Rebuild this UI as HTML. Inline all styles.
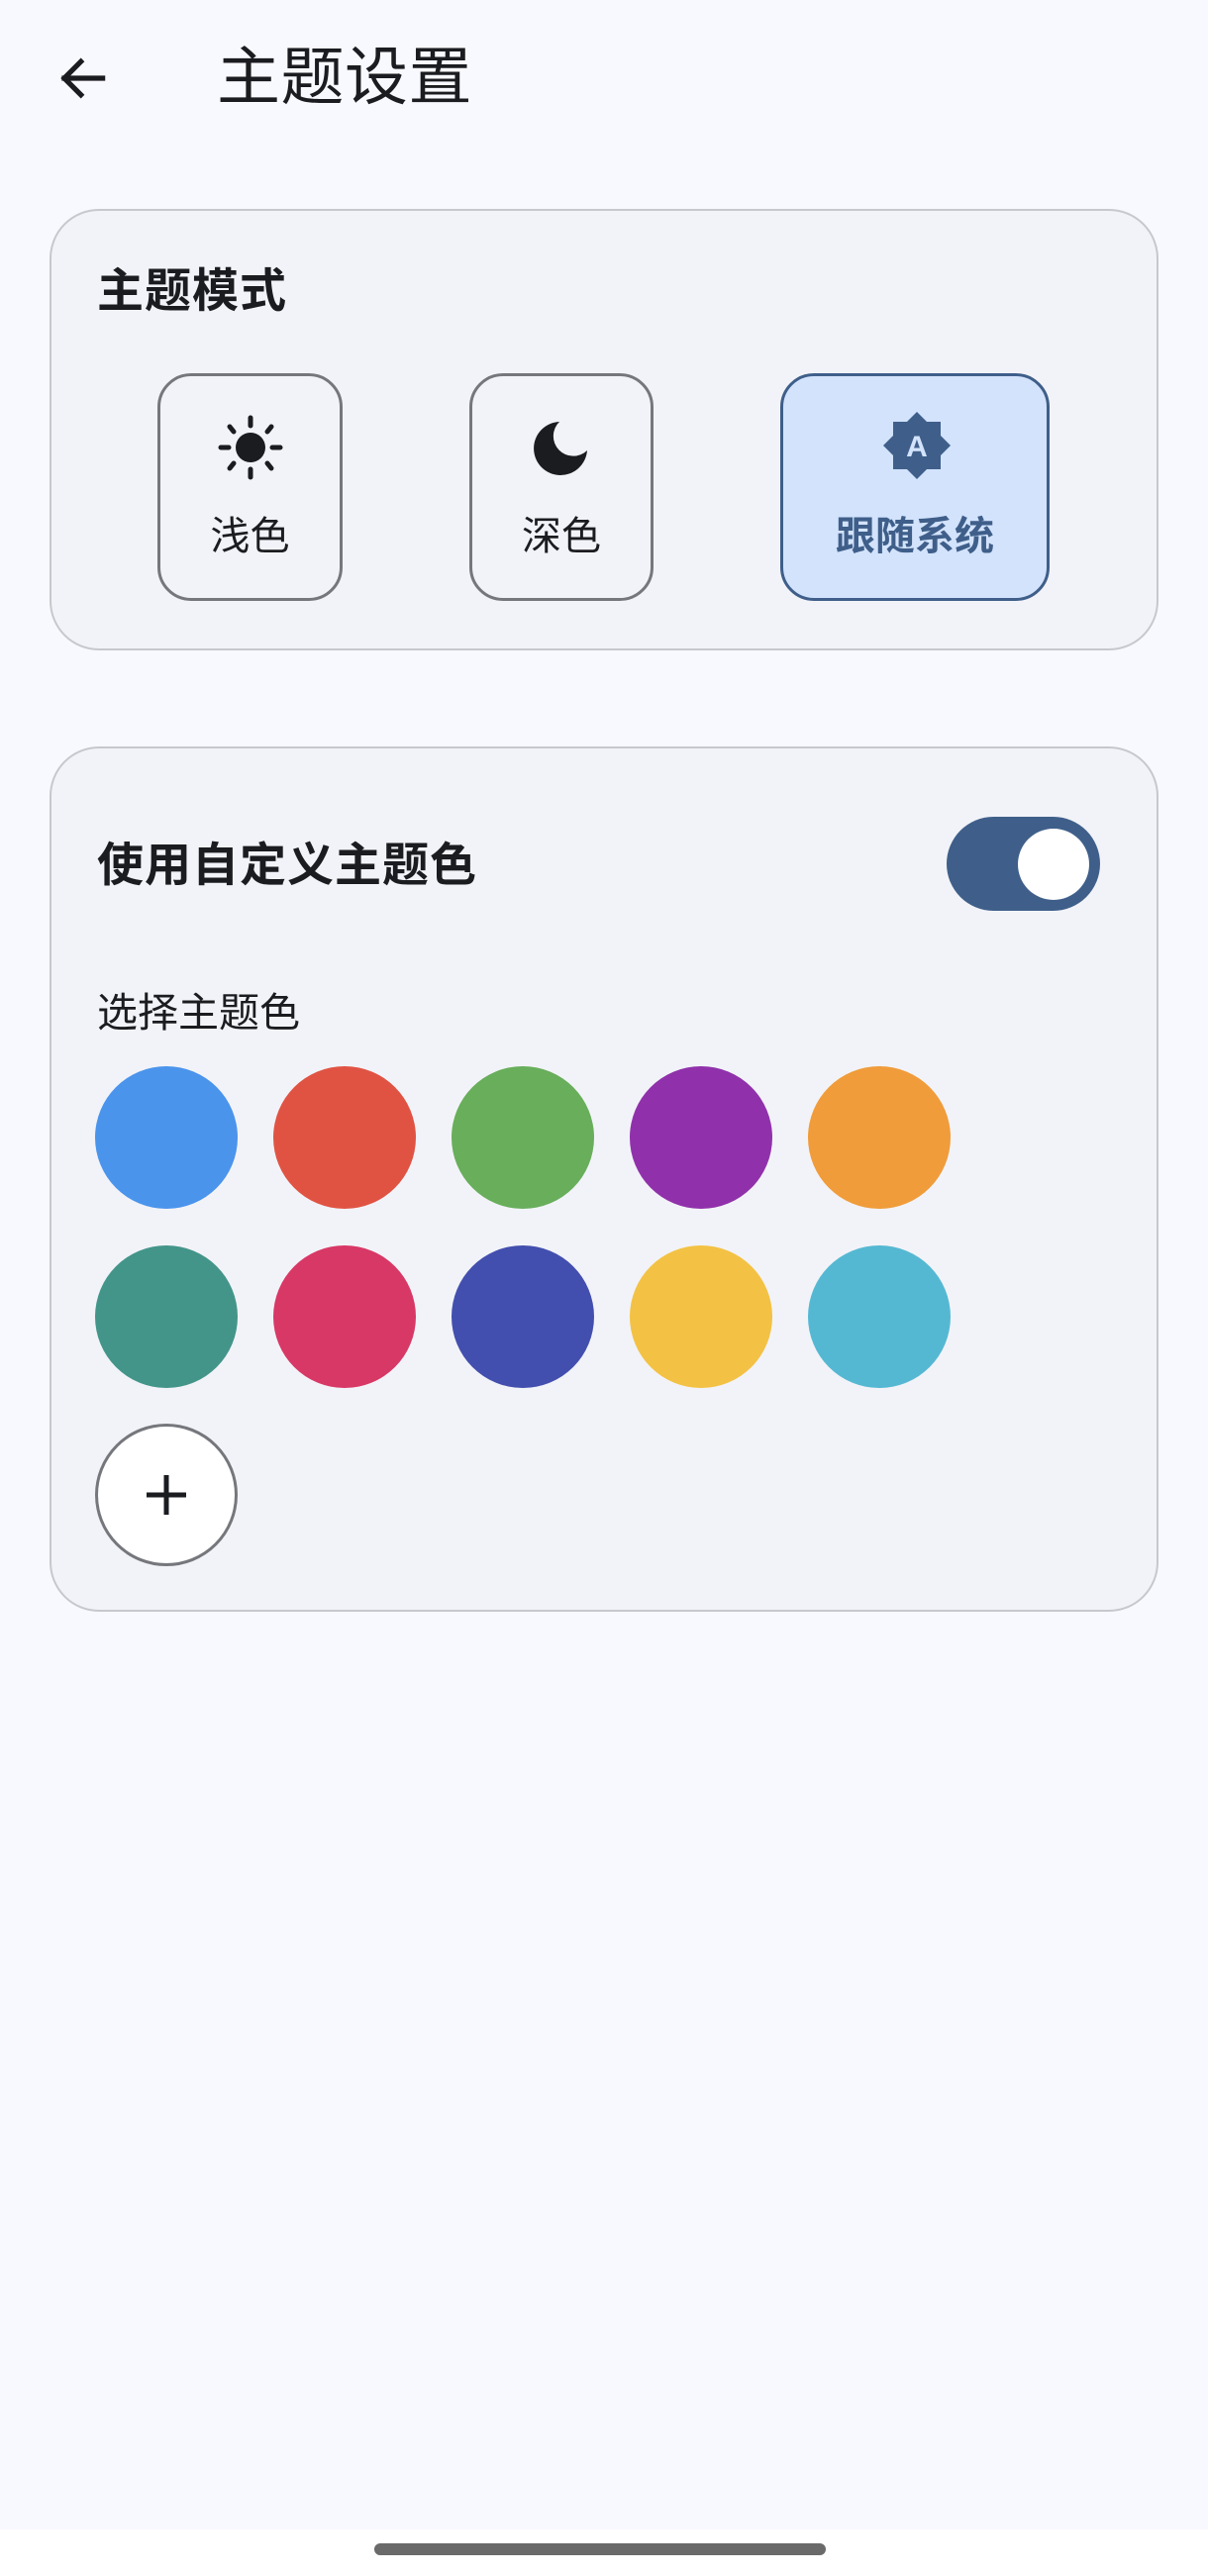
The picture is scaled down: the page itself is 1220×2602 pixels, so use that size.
<!DOCTYPE html>
<html><head><meta charset="utf-8">
<style>
*{margin:0;padding:0;box-sizing:border-box}
body{width:1220px;height:2602px;background:#f8f9fe;position:relative;overflow:hidden;font-family:"Liberation Sans","Noto Sans CJK SC",sans-serif;color:#1b1c20}
.abs{position:absolute}
.card{position:absolute;left:50px;width:1120px;background:#f2f3f8;border:2.5px solid #c7c8cd;border-radius:50px}
.btn{position:absolute;top:377px;height:230px;border:3px solid #75777c;border-radius:34px;background:#f2f3f8}
.lbl{position:absolute;left:0;right:0;top:140px;text-align:center;font-size:40px;line-height:44px}
.c{position:absolute;width:144px;height:144px;border-radius:50%}
</style></head><body>
<svg class="abs" style="left:52px;top:48px" width="62" height="62" viewBox="0 0 24 24"><path d="M20 12H5M11.5 5.5L5 12l6.5 6.5" fill="none" stroke="#1b1c20" stroke-width="2" stroke-linecap="square"/></svg>
<div class="abs" style="left:219px;top:38px;font-size:64px;line-height:80px;letter-spacing:0.5px">主题设置</div>

<div class="card" style="top:211px;height:446px"></div>
<div class="abs" style="left:98px;top:266px;font-size:47px;line-height:56px;font-weight:bold;letter-spacing:1px">主题模式</div>
<div class="btn" style="left:159px;width:187px">
 <svg class="abs" style="left:58px;top:39px" width="66" height="66" viewBox="0 0 66 66"><circle cx="33" cy="33" r="15" fill="#1b1c20"/><g stroke="#1b1c20" stroke-width="5" stroke-linecap="round"><path d="M33 3v8M33 55v8M3 33h8M55 33h8M12 12l4 5M54 12l-4 5M12 54l4-5M54 54l-4-5"/></g></svg>
 <div class="lbl">浅色</div>
</div>
<div class="btn" style="left:474px;width:186px">
 <svg class="abs" style="left:60px;top:44px" width="60" height="60" viewBox="0 0 60 60"><path d="M28 2A27 27 0 1 0 56 31 14 14 0 0 1 28 2Z" fill="#1b1c20"/></svg>
 <div class="lbl">深色</div>
</div>
<div class="btn" style="left:788px;width:272px;background:#d3e3fc;border-color:#3f5f8a">
 <svg class="abs" style="left:101px;top:36px" width="68" height="68" viewBox="0 0 68 68"><path d="M34 0l10 10h14v14l10 10-10 10v14H44L34 68 24 58H10V44L0 34l10-10V10h14z" fill="#3f5f8a"/><text x="34" y="45" text-anchor="middle" font-family="Liberation Sans" font-weight="bold" font-size="30" fill="#d3e3fc">A</text></svg>
 <div class="lbl" style="color:#3f5f8a;font-weight:bold">跟随系统</div>
</div>

<div class="card" style="top:754px;height:874px"></div>
<div class="abs" style="left:98px;top:846px;font-size:47px;line-height:56px;font-weight:bold;letter-spacing:1px">使用自定义主题色</div>
<div class="abs" style="left:956px;top:825px;width:155px;height:95px;border-radius:48px;background:#3f5f8a"></div>
<div class="abs" style="left:1028px;top:837px;width:72px;height:72px;border-radius:50%;background:#fff"></div>
<div class="abs" style="left:98px;top:998px;font-size:41px;line-height:50px">选择主题色</div>

<div class="c" style="left:96px;top:1077px;background:#4a94ec"></div>
<div class="c" style="left:276px;top:1077px;background:#e05343"></div>
<div class="c" style="left:456px;top:1077px;background:#68ae5b"></div>
<div class="c" style="left:636px;top:1077px;background:#9031ab"></div>
<div class="c" style="left:816px;top:1077px;background:#f09c3a"></div>
<div class="c" style="left:96px;top:1258px;background:#43958a"></div>
<div class="c" style="left:276px;top:1258px;background:#d83866"></div>
<div class="c" style="left:456px;top:1258px;background:#434fae"></div>
<div class="c" style="left:636px;top:1258px;background:#f3c244"></div>
<div class="c" style="left:816px;top:1258px;background:#55b8d3"></div>
<div class="c" style="left:96px;top:1438px;background:#fff;border:3px solid #75777c">
 <svg class="abs" style="left:45px;top:45px" width="48" height="48" viewBox="0 0 48 48"><path d="M24 4v40M4 24h40" stroke="#1b1c20" stroke-width="5"/></svg>
</div>

<div class="abs" style="left:0;top:2555px;width:1220px;height:47px;background:#fff"></div>
<div class="abs" style="left:378px;top:2569px;width:456px;height:12px;border-radius:6px;background:#6a6a6a"></div>
</body></html>
